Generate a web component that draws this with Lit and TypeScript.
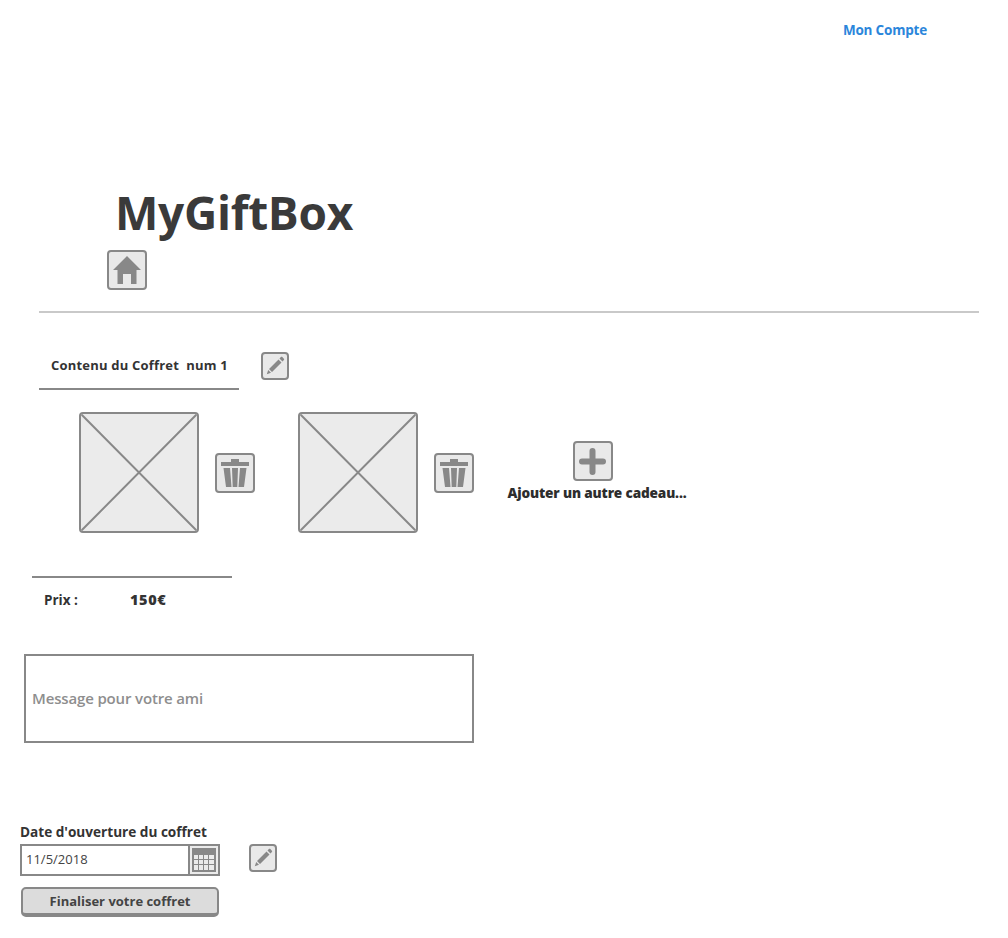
import { LitElement, html, css, svg } from "lit";
import { customElement } from "lit/decorators.js";

const home = svg`<path d="M14 0 0 14h4.500v14H10V18h8v10h5.500V14H28z" fill="#888"/>`;
const pencil = svg`<path d="M13.500 3.500l3 3L7 16l-3-3zM17.500 5.500l-3-3 1.400-1.400c.4-.4 1-.4 1.400 0l1.600 1.600c.4.4.4 1 0 1.400zM3.200 14l2.800 2.800-4.200 1.400z" fill="#888"/>`;
const trash = svg`<path d="M0 3h28v4H0zM10 0h8v3h-8zM2.500 9H9l1.500 19H5zM11 9h6l-.7 19h-4.600zM19 9h6.500L23 28h-5.500z" fill="#888"/>`;
const plus = svg`<path d="M10.500 3a3 3 0 0 1 6 0v7.500H24a3 3 0 0 1 0 6h-7.500V24a3 3 0 0 1-6 0v-7.500H3a3 3 0 0 1 0-6h7.500z" fill="#888"/>`;

@customElement("app-root")
export class AppRoot extends LitElement {
  static styles = css`
    :host {
      display: block;
      width: 1008px;
      height: 938px;
      background: #fff;
      font-family: "Open Sans", "Noto Sans", sans-serif;
      color: #333;
      overflow: hidden;
    }
    .account {
      display: flex;
      justify-content: flex-end;
      padding: 21px 81px 0 0;
      height: 165px;
      box-sizing: border-box;
      font-size: 13.5px;
      line-height: 18px;
      font-weight: 700;
      color: #2b86db;
      letter-spacing: -0.2px;
    }
    h1 {
      margin: 0;
      padding-left: 115px;
      font-size: 46px;
      line-height: 64px;
      height: 85px;
      box-sizing: border-box;
      padding-top: 15px;
      font-weight: 700;
      color: #3a3a3a;
      letter-spacing: -0.3px;
    }
    .btn {
      display: flex;
      align-items: center;
      justify-content: center;
      box-sizing: border-box;
      background: #e9e9e9;
      border: 2px solid #888;
      border-radius: 4px;
      flex: none;
    }
    .b40 { width: 40px; height: 40px; }
    .b28 { width: 28px; height: 28px; }
    .home { margin-left: 107px; }
    .rule {
      height: 2px;
      background: #c9c9c9;
      margin: 21px 29px 0 39px;
    }
    .head {
      display: flex;
      margin: 38px 0 0 39px;
      align-items: flex-start;
      gap: 22px;
    }
    .head .btn { margin-top: 1px; }
    .title {
      width: 200px;
      height: 39px;
      box-sizing: border-box;
      border-bottom: 2px solid #888;
      padding: 5px 0 0 12px;
      font-size: 13px;
      line-height: 18px;
      font-weight: 700;
      white-space: pre;
      letter-spacing: 0.2px;
    }
    .gifts {
      display: flex;
      align-items: center;
      margin: 22px 0 0 79px;
    }
    .img {
      width: 120px;
      height: 121px;
      flex: none;
      box-sizing: border-box;
      display: block;
      background: #ebebeb;
      border: 2px solid #888;
      border-radius: 4px;
    }
    .gift { display: flex; align-items: center; gap: 16px; margin-right: 43px; }
    .add {
      display: flex;
      flex-direction: column;
      align-items: center;
      width: 180px;
      margin: 0 0 0 -10px;
      padding-bottom: 2px;
    }
    .add .btn { margin-right: 9px; }
    .add span {
      font-size: 13.6px;
      line-height: 18px;
      margin-top: 3px;
      font-weight: 800;
      color: #2d2d2d;
      white-space: nowrap;
      letter-spacing: -0.15px;
    }
    .price {
      width: 200px;
      box-sizing: border-box;
      margin: 43px 0 0 32px;
      border-top: 2px solid #888;
      padding: 13px 0 0 12px;
      display: flex;
      font-size: 13.5px;
      line-height: 18px;
      font-weight: 700;
    }
    .price b { width: 86px; font-weight: 700; }
    .price i { font-style: normal; font-weight: 800; font-size: 14.5px; letter-spacing: 0.6px; }
    .message {
      width: 450px;
      height: 89px;
      box-sizing: border-box;
      margin: 45px 0 0 24px;
      border: 2px solid #888;
      padding: 0 6px 2px;
      display: flex;
      align-items: center;
      font-size: 15px;
      font-weight: 600;
      color: #8e8e8e;
      letter-spacing: -0.15px;
    }
    .date-label {
      margin: 79px 0 0 20px;
      font-size: 13.6px;
      line-height: 20px;
      font-weight: 700;
    }
    .date-row {
      display: flex;
      align-items: flex-start;
      margin: 2px 0 0 20px;
    }
    .date {
      display: flex;
      width: 200px;
      height: 32px;
      box-sizing: border-box;
      border: 2px solid #888;
      margin-right: 29px;
    }
    .date span {
      flex: 1;
      padding-left: 4px;
      font-size: 13px;
      line-height: 26px;
      color: #444;
    }
    .cal {
      width: 30px;
      box-sizing: border-box;
      border-left: 2px solid #888;
      background: #ebebeb;
      display: flex;
      align-items: center;
      justify-content: center;
    }
    .finish {
      width: 198px;
      height: 30px;
      box-sizing: border-box;
      margin: 11px 0 0 21px;
      background: #dcdcdc;
      border: 2px solid #888;
      border-bottom-width: 4px;
      border-radius: 5px;
      text-align: center;
      font-size: 13px;
      line-height: 25px;
      font-weight: 700;
      color: #444;
    }
  `;

  private icon(kind: unknown, w: number, h: number) {
    return html`<svg width=${w} height=${h} viewBox="0 0 ${w} ${h}">${kind}</svg>`;
  }

  private image() {
    return html`<svg class="img" viewBox="0 0 116 117" preserveAspectRatio="none">
      <path d="M0 0 116 117M116 0 0 117" stroke="#888" stroke-width="2" fill="none"/>
    </svg>`;
  }

  private gift() {
    return html`<div class="gift">
      ${this.image()}
      <div class="btn b40">${this.icon(trash, 28, 28)}</div>
    </div>`;
  }

  render() {
    return html`
      <div class="account">Mon Compte</div>
      <h1>MyGiftBox</h1>
      <div class="btn b40 home">${this.icon(home, 28, 28)}</div>
      <div class="rule"></div>
      <div class="head">
        <div class="title">Contenu du Coffret  num 1</div>
        <div class="btn b28">${this.icon(pencil, 20, 20)}</div>
      </div>
      <div class="gifts">
        ${this.gift()}${this.gift()}
        <div class="add">
          <div class="btn b40">${this.icon(plus, 27, 27)}</div>
          <span>Ajouter un autre cadeau...</span>
        </div>
      </div>
      <div class="price"><b>Prix :</b><i>150€</i></div>
      <div class="message">Message pour votre ami</div>
      <div class="date-label">Date d'ouverture du coffret</div>
      <div class="date-row">
        <div class="date">
          <span>11/5/2018</span>
          <div class="cal">
            <svg width="24" height="24" viewBox="0 0 24 24">
              <rect width="24" height="24" fill="#888"/>
              <path d="M2 7h4v4H2zM7 7h4v4H7zM12 7h4v4h-4zM17 7h5v4h-5zM2 12h4v4H2zM7 12h4v4H7zM12 12h4v4h-4zM17 12h5v4h-5zM2 17h4v5H2zM7 17h4v5H7zM12 17h4v5h-4zM17 17h5v5h-5z" fill="#ebebeb"/>
            </svg>
          </div>
        </div>
        <div class="btn b28">${this.icon(pencil, 20, 20)}</div>
      </div>
      <div class="finish">Finaliser votre coffret</div>
    `;
  }
}
